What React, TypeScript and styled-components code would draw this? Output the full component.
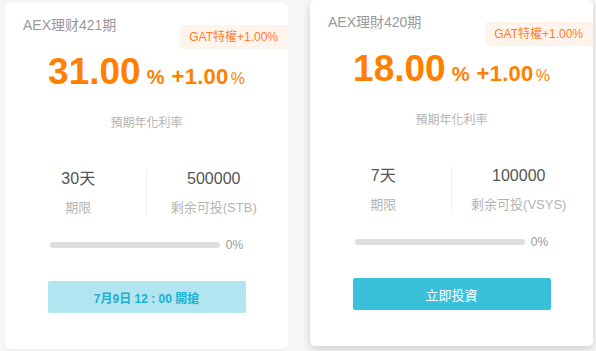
import React from "react";
import styled, { createGlobalStyle } from "styled-components";

const GlobalStyle = createGlobalStyle`
  html, body {
    margin: 0;
    padding: 0;
    background: #f6f6f6;
  }
  body {
    font-family: "Liberation Sans", Arial, "Noto Sans CJK TC", "Noto Sans CJK SC", sans-serif;
  }
`;

const Page = styled.div`
  width: 596px;
  height: 351px;
  padding: 3px 0 0 5px;
  box-sizing: border-box;
  display: flex;
  align-items: flex-start;
  gap: 22px;
  overflow: hidden;
`;

const Card = styled.div<{ $raised?: boolean }>`
  position: relative;
  width: 283px;
  height: 346px;
  box-sizing: border-box;
  padding: 13px 0 0;
  background: #fff;
  border-radius: 5px;
  display: flex;
  flex-direction: column;
  align-items: center;
  box-shadow: ${({ $raised }) =>
    $raised ? "0 3px 8px rgba(0, 0, 0, 0.16)" : "0 1px 3px rgba(0, 0, 0, 0.04)"};
  transform: ${({ $raised }) => ($raised ? "translateY(-3px)" : "none")};
`;

const Title = styled.div`
  align-self: stretch;
  padding-left: 18px;
  font-size: 14px;
  line-height: 18px;
  color: #999;
`;

const Badge = styled.div`
  position: absolute;
  top: 22px;
  right: 0;
  height: 24px;
  line-height: 24px;
  padding: 0 10px 0 9px;
  font-size: 12px;
  color: #ff7d2d;
  background: #fff4ec;
  border-radius: 4px 0 0 4px;
`;

const RateRow = styled.div`
  margin-top: 16px;
  display: flex;
  align-items: baseline;
  color: #ff7f00;
  line-height: 44px;
`;

const Rate = styled.span`
  font-size: 37px;
  font-weight: bold;
`;

const Unit = styled.span<{ $bold?: boolean }>`
  font-size: ${({ $bold }) => ($bold ? "20px" : "16px")};
  font-weight: ${({ $bold }) => ($bold ? "bold" : "normal")};
  margin-left: ${({ $bold }) => ($bold ? "6px" : "2px")};
`;

const Extra = styled.span`
  font-size: 22px;
  font-weight: bold;
  margin-left: 7px;
  letter-spacing: 0.3px;
`;

const Caption = styled.div`
  margin-top: 15px;
  font-size: 12px;
  line-height: 14px;
  color: #b4b4b4;
`;

const Stats = styled.div`
  margin-top: 40px;
  align-self: stretch;
  padding: 0 7px 0 6px;
  display: flex;
`;

const Stat = styled.div<{ $divided?: boolean }>`
  flex: 1;
  display: flex;
  flex-direction: column;
  align-items: center;
  gap: 12px;
  border-left: ${({ $divided }) => ($divided ? "1px solid #eee" : "none")};
`;

const StatValue = styled.div`
  font-size: 16px;
  line-height: 18px;
  color: #555;
`;

const StatLabel = styled.div`
  font-size: 13px;
  line-height: 16px;
  color: #b4b4b4;
`;

const ProgressRow = styled.div`
  margin-top: 22px;
  display: flex;
  align-items: center;
  gap: 6px;
  font-size: 12px;
  color: #999;
`;

const Track = styled.div`
  width: 170px;
  height: 6px;
  border-radius: 3px;
  background: #dedede;
`;

const Button = styled.div<{ $waiting?: boolean }>`
  margin-top: 29px;
  width: 198px;
  height: 32px;
  border-radius: 2px;
  display: flex;
  align-items: center;
  justify-content: center;
  font-size: ${({ $waiting }) => ($waiting ? "12px" : "13px")};
  font-weight: ${({ $waiting }) => ($waiting ? "bold" : "normal")};
  color: ${({ $waiting }) => ($waiting ? "#1aafd3" : "#fff")};
  background: ${({ $waiting }) => ($waiting ? "#b1e5f0" : "#3bc0dc")};
`;

type Product = {
  title: string;
  rate: string;
  days: string;
  remain: string;
  coin: string;
  action: string;
  waiting: boolean;
};

const products: Product[] = [
  {
    title: "AEX理财421期",
    rate: "31.00",
    days: "30天",
    remain: "500000",
    coin: "STB",
    action: "7月9日 12 : 00 開搶",
    waiting: true,
  },
  {
    title: "AEX理財420期",
    rate: "18.00",
    days: "7天",
    remain: "100000",
    coin: "VSYS",
    action: "立即投資",
    waiting: false,
  },
];

const App = () => {
  return (
    <Page>
      <GlobalStyle />
      {products.map((p) => (
        <Card key={p.title} $raised={!p.waiting}>
          <Title>{p.title}</Title>
          <Badge>GAT特權+1.00%</Badge>
          <RateRow>
            <Rate>{p.rate}</Rate>
            <Unit $bold>%</Unit>
            <Extra>+1.00</Extra>
            <Unit>%</Unit>
          </RateRow>
          <Caption>預期年化利率</Caption>
          <Stats>
            <Stat>
              <StatValue>{p.days}</StatValue>
              <StatLabel>期限</StatLabel>
            </Stat>
            <Stat $divided>
              <StatValue>{p.remain}</StatValue>
              <StatLabel>剩余可投({p.coin})</StatLabel>
            </Stat>
          </Stats>
          <ProgressRow>
            <Track />
            <span>0%</span>
          </ProgressRow>
          <Button $waiting={p.waiting}>{p.action}</Button>
        </Card>
      ))}
    </Page>
  );
};

export default App;
